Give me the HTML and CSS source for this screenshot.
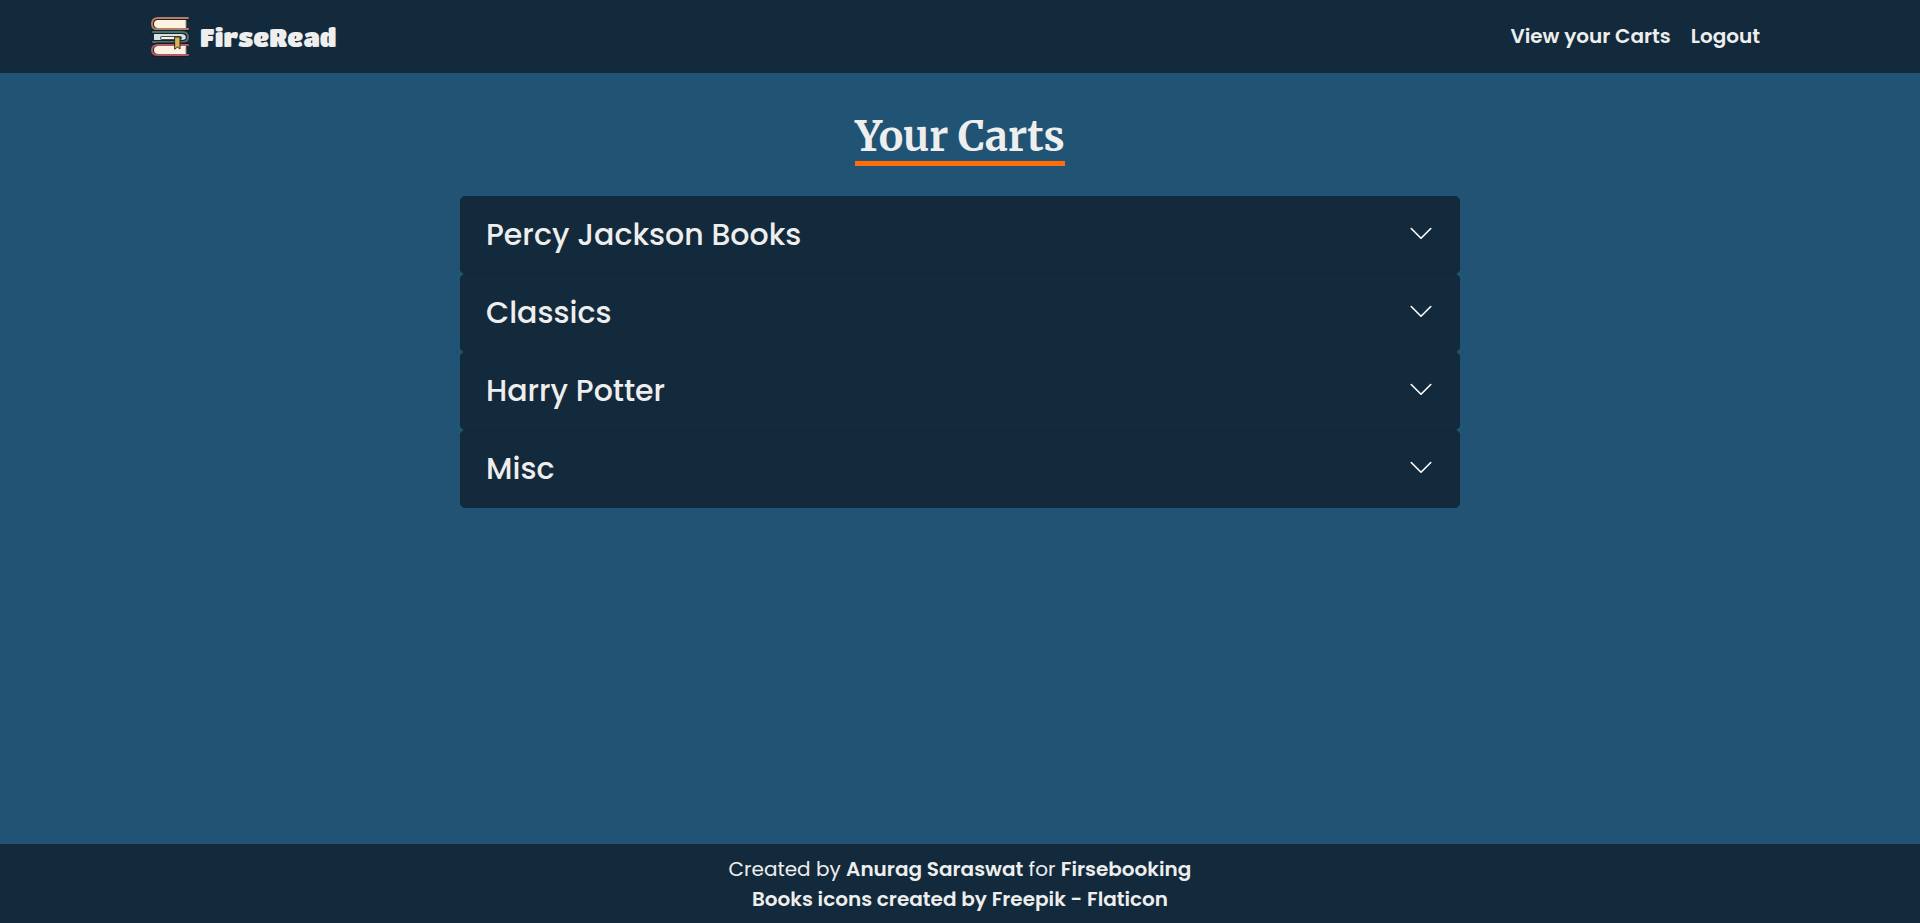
FILE: index.html
```html
<!DOCTYPE html>
<html lang="en">
<head>
<meta charset="utf-8">
<meta name="viewport" content="width=device-width, initial-scale=1">
<title>FirseRead</title>
<link rel="stylesheet" href="styles.css">
</head>
<body>
<header class="header">
  <div class="header-inner">
    <a class="brand" href="#">
      <svg class="logo" viewBox="0 0 40 40" aria-hidden="true">
        <g stroke-linecap="round" stroke-linejoin="round">
          <path d="M8 3H36V11H8Q4 11 4 7T8 3Z" fill="#fff1df"/>
          <path d="M36 4V10" stroke="#9c8377" stroke-width="1"/>
          <path d="M38 1H8Q2 1 2 7T8 13H38" fill="none" stroke="#2a151a" stroke-width="3"/>
          <path d="M38 1H8Q2 1 2 7T8 12H38" fill="none" stroke="#b08068" stroke-width="2"/>
          <path d="M4 17H32Q36 17 36 21T32 25H4Z" fill="#d9e2dc"/>
          <path d="M12 21H30" stroke="#35505a" stroke-width="4"/>
          <path d="M12 21H28" stroke="#fff1df" stroke-width="2"/>
          <path d="M2 15H32Q38 15 38 20T32 25H2" fill="none" stroke="#102431" stroke-width="4"/>
          <path d="M3 15H32Q38 15 38 20T32 25H3" fill="none" stroke="#4d736f" stroke-width="2"/>
          <path d="M8 29H36V37H8Q4 37 4 33T8 29Z" fill="#fff1df"/>
          <path d="M36 30V36" stroke="#9c8377" stroke-width="1"/>
          <path d="M38 27H8Q2 27 2 33T8 39H38" fill="none" stroke="#2a151a" stroke-width="3"/>
          <path d="M38 28H8Q2 28 2 33T8 38H38" fill="none" stroke="#a85d70" stroke-width="2"/>
          <path d="M25 20H30V32L27.500 30L25 32Z" fill="#d9b455" stroke="#352923" stroke-width="1"/>
        </g>
      </svg>
      <span>FirseRead</span>
    </a>
    <nav class="nav">
      <a href="#">View your Carts</a>
      <a href="#">Logout</a>
    </nav>
  </div>
</header>
<main class="main">
  <h1 class="title">Your Carts</h1>
  <div class="carts">
    <button class="cart" type="button" aria-expanded="false"><span>Percy Jackson Books</span><svg class="chevron" viewBox="0 0 16 16" aria-hidden="true"><path d="M2 4L8 10L14 4"/></svg></button>
    <button class="cart" type="button" aria-expanded="false"><span>Classics</span><svg class="chevron" viewBox="0 0 16 16" aria-hidden="true"><path d="M2 4L8 10L14 4"/></svg></button>
    <button class="cart" type="button" aria-expanded="false"><span>Harry Potter</span><svg class="chevron" viewBox="0 0 16 16" aria-hidden="true"><path d="M2 4L8 10L14 4"/></svg></button>
    <button class="cart" type="button" aria-expanded="false"><span>Misc</span><svg class="chevron" viewBox="0 0 16 16" aria-hidden="true"><path d="M2 4L8 10L14 4"/></svg></button>
  </div>
</main>
<footer class="footer">
  <p>Created by <a href="#">Anurag Saraswat</a> for <a href="#">Firsebooking</a></p>
  <p><a href="#">Books icons created by Freepik - Flaticon</a></p>
</footer>
</body>
</html>
```
FILE: styles.css
```css
* { box-sizing: border-box; }

body {
  margin: 0;
  min-height: 100vh;
  display: flex;
  flex-direction: column;
  background: #215375;
  color: #eee;
  font: 400 20px/30px Poppins, Inter, sans-serif;
}

a { color: inherit; text-decoration: none; }

.header { background: #132a3c; }

.header-inner {
  display: flex;
  align-items: center;
  justify-content: space-between;
  max-width: 1620px;
  min-height: 73px;
  margin: 0 auto;
}

.brand {
  display: flex;
  align-items: center;
  gap: 10px;
  font: 400 25px/40px "Titan One", Inter, sans-serif;
}

.logo { width: 40px; height: 40px; }

.nav { display: flex; padding-bottom: 2px; font-weight: 600; }
.nav a { padding: 0 10px; }

.main {
  flex: 1;
  display: flex;
  flex-direction: column;
  align-items: center;
  gap: 30px;
  padding: 40px 20px;
}

.title {
  margin: 0;
  border-bottom: 5px solid #ff6c0a;
  font: 700 41px/48px Merriweather, "Liberation Serif", serif;
}

.carts { width: 100%; max-width: 1000px; }

.cart {
  display: flex;
  align-items: center;
  justify-content: space-between;
  width: 100%;
  padding: 14px 25px;
  border: 1px solid #112835;
  border-radius: 5px;
  background: #132a3c;
  color: inherit;
  font: 500 30px/48px Poppins, Inter, sans-serif;
  text-align: left;
}

.chevron {
  width: 26px;
  height: 26px;
  fill: none;
  stroke: #fff;
  stroke-width: 1;
  stroke-linecap: round;
  stroke-linejoin: round;
}

.footer {
  padding: 10px 20px 9px;
  background: #132a3c;
  text-align: center;
}

.footer p { margin: 0; }
.footer a { font-weight: 600; }
```
